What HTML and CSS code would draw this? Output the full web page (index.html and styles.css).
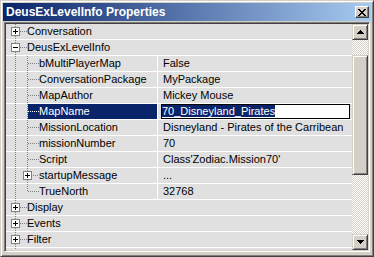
FILE: index.html
```html
<!DOCTYPE html>
<html lang="en">
<head>
    <meta charset="UTF-8">
    <title>DeusExLevelInfo Properties</title>
    <link rel="stylesheet" href="styles.css">
</head>
<body>
 <div class="window">
  <div class="titlebar">
   <span class="title">DeusExLevelInfo Properties</span>
   <span class="close">
    <svg width="8" height="7" viewBox="0 0 8 7" shape-rendering="crispEdges">
     <path d="M0 0h2v1h-2zM6 0h2v1h-2zM1 1h2v1h-2zM5 1h2v1h-2zM2 2h4v1h-4zM3 3h2v1h-2zM2 4h4v1h-4zM1 5h2v1h-2zM5 5h2v1h-2zM0 6h2v1h-2zM6 6h2v1h-2z"/>
    </svg>
   </span>
  </div>

  <div class="list">
   <div class="rows">
    <div class="row">
     <span class="name"><i class="g g-root"><svg class="box" width="9" height="9" shape-rendering="crispEdges"><rect x=".5" y=".5" width="8" height="8"/><path d="M2 4.5h5M4.5 2v5"/></svg></i><span class="label">Conversation</span></span>
    </div>
    <div class="row">
     <span class="name"><i class="g g-root"><svg class="box" width="9" height="9" shape-rendering="crispEdges"><rect x=".5" y=".5" width="8" height="8"/><path d="M2 4.5h5"/></svg></i><span class="label">DeusExLevelInfo</span></span>
    </div>
    <div class="row">
     <span class="name"><i class="g g-line"></i><i class="g g-leaf"></i><span class="label">bMultiPlayerMap</span></span>
     <span class="val">False</span>
    </div>
    <div class="row">
     <span class="name"><i class="g g-line"></i><i class="g g-leaf"></i><span class="label">ConversationPackage</span></span>
     <span class="val">MyPackage</span>
    </div>
    <div class="row">
     <span class="name"><i class="g g-line"></i><i class="g g-leaf"></i><span class="label">MapAuthor</span></span>
     <span class="val">Mickey Mouse</span>
    </div>
    <div class="row sel">
     <span class="name"><i class="g g-line"></i><i class="g g-leaf"></i><span class="label">MapName</span></span>
     <span class="val edit"><span class="editbox"><span class="hl">70_Disneyland_Pirates</span></span></span>
    </div>
    <div class="row">
     <span class="name"><i class="g g-line"></i><i class="g g-leaf"></i><span class="label">MissionLocation</span></span>
     <span class="val">Disneyland - Pirates of the Carribean</span>
    </div>
    <div class="row">
     <span class="name"><i class="g g-line"></i><i class="g g-leaf"></i><span class="label">missionNumber</span></span>
     <span class="val">70</span>
    </div>
    <div class="row">
     <span class="name"><i class="g g-line"></i><i class="g g-leaf"></i><span class="label">Script</span></span>
     <span class="val">Class'Zodiac.Mission70'</span>
    </div>
    <div class="row">
     <span class="name"><i class="g g-line"></i><i class="g g-node"><svg class="box" width="9" height="9" shape-rendering="crispEdges"><rect x=".5" y=".5" width="8" height="8"/><path d="M2 4.5h5M4.5 2v5"/></svg></i><span class="label">startupMessage</span></span>
     <span class="val">...</span>
    </div>
    <div class="row">
     <span class="name"><i class="g g-line"></i><i class="g g-last"></i><span class="label">TrueNorth</span></span>
     <span class="val">32768</span>
    </div>
    <div class="row">
     <span class="name"><i class="g g-root"><svg class="box" width="9" height="9" shape-rendering="crispEdges"><rect x=".5" y=".5" width="8" height="8"/><path d="M2 4.5h5M4.5 2v5"/></svg></i><span class="label">Display</span></span>
    </div>
    <div class="row">
     <span class="name"><i class="g g-root"><svg class="box" width="9" height="9" shape-rendering="crispEdges"><rect x=".5" y=".5" width="8" height="8"/><path d="M2 4.5h5M4.5 2v5"/></svg></i><span class="label">Events</span></span>
    </div>
    <div class="row">
     <span class="name"><i class="g g-root"><svg class="box" width="9" height="9" shape-rendering="crispEdges"><rect x=".5" y=".5" width="8" height="8"/><path d="M2 4.5h5M4.5 2v5"/></svg></i><span class="label">Filter</span></span>
    </div>
    <div class="tail"><i class="g g-line"></i></div>
   </div>

   <div class="scrollbar">
    <span class="sb-btn">
     <svg width="7" height="4" viewBox="0 0 7 4" shape-rendering="crispEdges"><path d="M3 0h1v1h1v1h1v1h1v1h-7v-1h1v-1h1v-1h1z"/></svg>
    </span>
    <span class="track track-top"></span>
    <span class="thumb"></span>
    <span class="track track-bottom"></span>
    <span class="sb-btn">
     <svg width="7" height="4" viewBox="0 0 7 4" shape-rendering="crispEdges"><path d="M0 0h7v1h-1v1h-1v1h-1v1h-1v-1h-1v-1h-1v-1h-1z"/></svg>
    </span>
   </div>
  </div>
 </div>
</body>
</html>
```

FILE: styles.css
```css
body {
    margin: 0;
    font-family: "Liberation Sans", Arial, sans-serif;
    font-size: 11px;
    background-color: #d4d0c8;
    overflow: hidden;
}
.window {
    width: 374px;
    height: 257px;
    box-sizing: border-box;
    padding: 2px;
    display: flex;
    flex-direction: column;
    background-color: #d4d0c8;
    border: 1px solid;
    border-color: #d4d0c8 #404040 #404040 #d4d0c8;
    box-shadow: inset 1px 1px #fff, inset -1px -1px #808080;
}
.titlebar {
    height: 18px;
    flex: none;
    display: flex;
    align-items: center;
    padding: 0 2px 0 3px;
    background: linear-gradient(to right, #0a246a, #a6caf0);
}
.title {
    flex: 1;
    color: #fff;
    font-weight: bold;
    font-size: 12px;
}
.close {
    width: 14px;
    height: 12px;
    box-sizing: border-box;
    display: flex;
    align-items: center;
    justify-content: center;
    background-color: #d4d0c8;
    border: 1px solid;
    border-color: #fff #404040 #404040 #fff;
    box-shadow: inset -1px -1px #808080;
}

/* sunken list */
.list {
    flex: 1;
    display: flex;
    margin: 1px 1px 2px;
    padding: 1px;
    border: 1px solid;
    border-color: #808080 #fff #fff #808080;
    box-shadow: inset 1px 1px #404040, inset -1px -1px #d4d0c8;
    min-height: 0;
}
.rows {
    flex: 1;
    display: flex;
    flex-direction: column;
    background-color: #e0e0e0;
}
.row {
    display: flex;
    height: 15px;
    flex: none;
    line-height: 15px;
    white-space: nowrap;
    border-bottom: 1px solid #fff;
}
.name {
    width: 151px;
    flex: none;
    display: flex;
}
.label { padding-left: 0; }
.val {
    flex: 1;
    border-left: 1px solid #fff;
    padding-left: 5px;
    overflow: hidden;
}
.tail {
    flex: 1;
    display: flex;
}
.tail .g { height: auto; }

/* tree lines */
.g {
    flex: none;
    height: 15px;
    display: flex;
    align-items: center;
    box-sizing: border-box;
}
.box { display: block; }
.box rect { fill: #fff; stroke: #808080; }
.box path { stroke: #000; }
.g-root {
    width: 21px;
    padding-left: 5px;
    background:
        repeating-linear-gradient(to right, #808080 0 1px, transparent 1px 2px) 14px 7px / 7px 1px no-repeat,
        repeating-linear-gradient(#808080 0 1px, transparent 1px 2px) 9px 0 / 1px 100% no-repeat;
}
.g-line {
    width: 17px;
    background: repeating-linear-gradient(#808080 0 1px, transparent 1px 2px) 9px 0 / 1px 100% no-repeat;
}
.g-leaf {
    width: 16px;
    background:
        repeating-linear-gradient(to right, #808080 0 1px, transparent 1px 2px) 5px 7px / 11px 1px no-repeat,
        repeating-linear-gradient(#808080 0 1px, transparent 1px 2px) 4px 0 / 1px 100% no-repeat;
}
.g-last {
    width: 16px;
    background:
        repeating-linear-gradient(to right, #808080 0 1px, transparent 1px 2px) 5px 7px / 11px 1px no-repeat,
        repeating-linear-gradient(#808080 0 1px, transparent 1px 2px) 4px 0 / 1px 8px no-repeat;
}
.g-node {
    width: 16px;
    background:
        repeating-linear-gradient(to right, #808080 0 1px, transparent 1px 2px) 10px 7px / 6px 1px no-repeat,
        repeating-linear-gradient(#808080 0 1px, transparent 1px 2px) 4px 0 / 1px 100% no-repeat;
}

/* selected row */
.sel .g-leaf {
    background:
        repeating-linear-gradient(to right, #fff 0 1px, transparent 1px 2px) 5px 7px / 11px 1px no-repeat,
        linear-gradient(#0a246a, #0a246a) 5px 0 / 11px 100% no-repeat,
        repeating-linear-gradient(#808080 0 1px, transparent 1px 2px) 4px 0 / 1px 100% no-repeat;
}
.sel .label {
    flex: 1;
    color: #fff;
    background-color: #0a246a;
}
.val.edit {
    padding: 0 2px 0 3px;
    display: flex;
}
.editbox {
    flex: 1;
    background-color: #fff;
    border: 1px solid #000;
    line-height: 13px;
}
.hl {
    color: #fff;
    background-color: #0a246a;
}

/* scrollbar */
.scrollbar {
    width: 16px;
    flex: none;
    display: flex;
    flex-direction: column;
}
.sb-btn, .thumb {
    box-sizing: border-box;
    background-color: #d4d0c8;
    border: 1px solid;
    border-color: #d4d0c8 #404040 #404040 #d4d0c8;
    box-shadow: inset 1px 1px #fff, inset -1px -1px #808080;
}
.sb-btn {
    height: 16px;
    flex: none;
    display: flex;
    align-items: center;
    justify-content: center;
}
.thumb {
    height: 120px;
    flex: none;
}
.track {
    background: repeating-conic-gradient(#fff 0 25%, #d4d0c8 0 50%) 0 0 / 2px 2px;
}
.track-top { height: 15px; flex: none; }
.track-bottom { flex: 1; }
```
